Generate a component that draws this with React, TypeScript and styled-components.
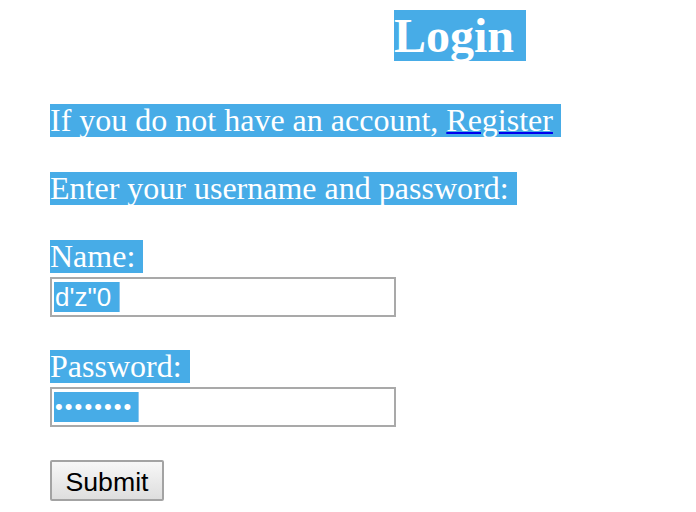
import React from "react";
import styled, { createGlobalStyle } from "styled-components";

const Global = createGlobalStyle`
  html, body { margin: 0; padding: 0; background: #ffffff; }
  body { font-family: "Liberation Serif", "Times New Roman", serif; }
`;

const HL = "#47ace7";

const Page = styled.div`
  display: flex;
  flex-direction: column;
  align-items: flex-start;
  padding: 10px 0 0 50px;
`;

const Title = styled.h2`
  margin: 0 0 43px 344px;
  font-size: 48px;
  font-weight: bold;
  line-height: 51px;
`;

const Line = styled.p<{ $gap: number }>`
  margin: 0 0 ${(p) => p.$gap}px 0;
  font-size: 32px;
  line-height: 33px;
`;

const Sel = styled.span`
  display: inline-block;
  background: ${HL};
  color: #ffffff;
  white-space: pre;
`;

const Link = styled.a`
  color: #ffffff;
  text-decoration: underline;
  text-decoration-color: #0000ee;
  text-decoration-thickness: 2px;
  text-underline-offset: 1px;
`;

const Field = styled.div`
  box-sizing: border-box;
  width: 346px;
  height: 40px;
  border: 2px solid #a9a9a9;
  padding: 3px 2px;
  display: flex;
  align-items: flex-start;
  margin: 4px 0 33px 0;
`;

const FieldSel = styled.span<{ $dots?: boolean }>`
  background: ${HL};
  color: #ffffff;
  height: 30px;
  line-height: 30px;
  font-family: "Liberation Sans", Arial, sans-serif;
  font-size: ${(p) => (p.$dots ? 22 : 26)}px;
  letter-spacing: ${(p) => (p.$dots ? "2.1px" : "0")};
  padding-left: 1px;
  padding-right: ${(p) => (p.$dots ? 5 : 8)}px;
  box-shadow: 1px 0 0 #8ec8ef;
  white-space: pre;
`;

const Button = styled.button`
  box-sizing: border-box;
  width: 114px;
  height: 41px;
  border: 2px solid #a3a3a3;
  border-radius: 2px;
  background: linear-gradient(#f7f7f7, #dedede);
  font-family: "Liberation Sans", Arial, sans-serif;
  font-size: 26.67px;
  color: #000000;
  padding: 3px 0 0 0;
`;

export default function App() {
  return (
    <>
      <Global />
      <Page>
        <Title>
          <Sel>Login </Sel>
        </Title>
        <Line $gap={35}>
          <Sel>
            If you do not have an account, <Link href="#">Register</Link>{" "}
          </Sel>
        </Line>
        <Line $gap={35}>
          <Sel>Enter your username and password: </Sel>
        </Line>
        <Line $gap={0}>
          <Sel>Name: </Sel>
        </Line>
        <Field>
          <FieldSel>d'z"0</FieldSel>
        </Field>
        <Line $gap={0}>
          <Sel>Password: </Sel>
        </Line>
        <Field>
          <FieldSel $dots>••••••••</FieldSel>
        </Field>
        <Button>Submit</Button>
      </Page>
    </>
  );
}
